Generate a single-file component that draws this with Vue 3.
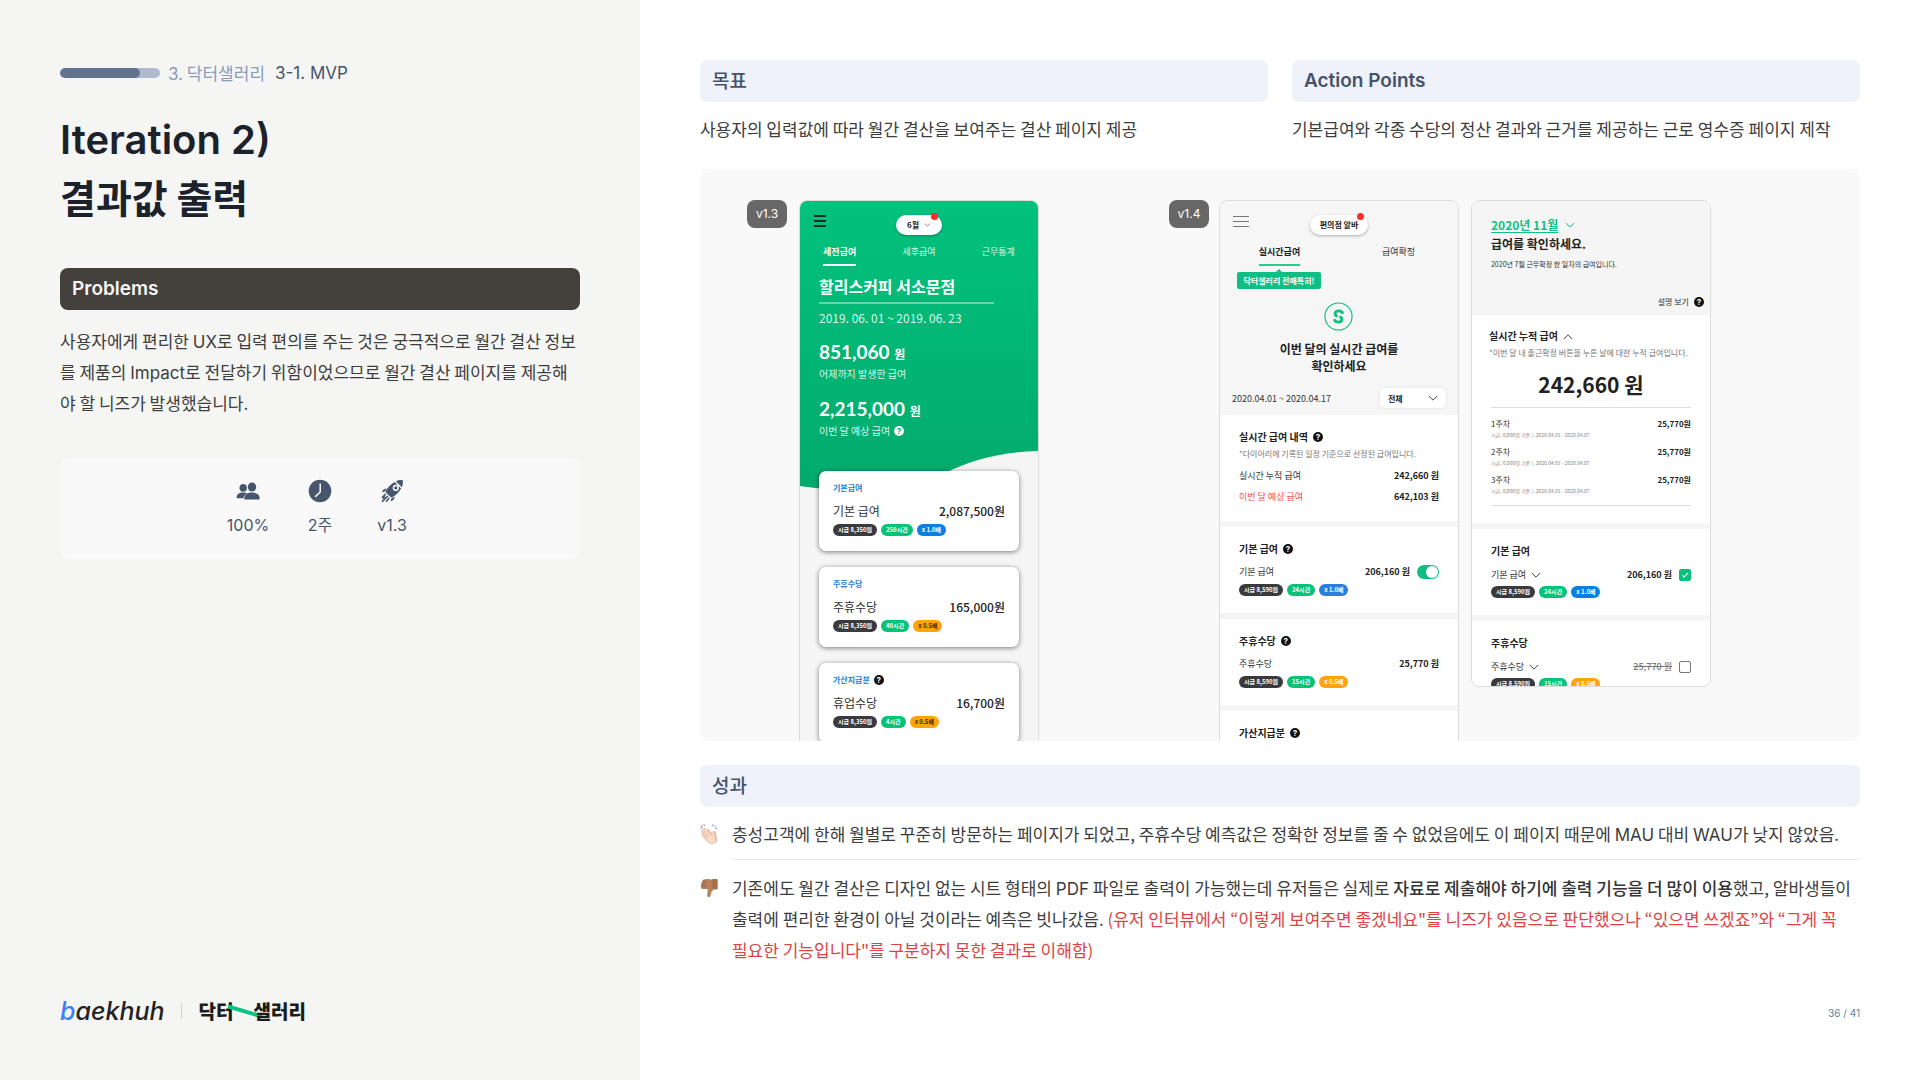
<script setup>
const stats = [
  { icon: 'people', label: '100%' },
  { icon: 'clock', label: '2주' },
  { icon: 'rocket', label: 'v1.3' },
]

const payCards = [
  {
    group: '기본급여', name: '기본 급여', amount: '2,087,500원', help: false,
    tags: [['dark', '시급 8,350원'], ['green', '250시간'], ['blue', 'x 1.0배']],
  },
  {
    group: '주휴수당', name: '주휴수당', amount: '165,000원', help: false,
    tags: [['dark', '시급 8,350원'], ['green', '40시간'], ['amber ink', 'x 0.5배']],
  },
  {
    group: '가산지급분', name: '휴업수당', amount: '16,700원', help: true,
    tags: [['dark', '시급 8,350원'], ['green', '4시간'], ['amber ink', 'x 0.5배']],
  },
]

const liveSections = [
  {
    title: '기본 급여', name: '기본 급여', amount: '206,160 원', toggle: true,
    tags: [['dark', '시급 8,590원'], ['green', '24시간'], ['royal', 'x 1.0배']],
  },
  {
    title: '주휴수당', name: '주휴수당', amount: '25,770 원', toggle: false,
    tags: [['dark', '시급 8,590원'], ['green', '15시간'], ['amber', 'x 0.5배']],
  },
]

const fixedSections = [
  {
    title: '기본 급여', name: '기본 급여', amount: '206,160 원', on: true,
    tags: [['dark', '시급 8,590원'], ['green', '24시간'], ['blue', 'x 1.0배']],
  },
  {
    title: '주휴수당', name: '주휴수당', amount: '25,770 원', on: false,
    tags: [['dark', '시급 8,590원'], ['green', '15시간'], ['amber', 'x 0.5배']],
  },
]

const weeks = ['1주차', '2주차', '3주차']
</script>

<template>
  <div class="slide">
    <aside class="side">
      <div class="crumb">
        <div class="progress"><div class="progress-fill"></div></div>
        <span class="crumb-parent"><span class="latin">3.</span> 닥터샐러리</span>
        <span class="crumb-current">3-1. MVP</span>
      </div>

      <h1 class="title">
        <span class="title-en">Iteration 2)</span>
        <span class="title-ko">결과값 출력</span>
      </h1>

      <h2 class="bar bar-dark">Problems</h2>
      <p class="copy problem">
        사용자에게 편리한 <span class="latin">UX</span>로 입력 편의를 주는 것은 궁극적으로 월간 결산 정보를 제품의
        <span class="latin">Impact</span>로 전달하기 위함이었으므로 월간 결산 페이지를 제공해야 할 니즈가 발생했습니다.
      </p>

      <ul class="stats">
        <li v-for="s in stats" :key="s.icon" class="stat">
          <svg v-if="s.icon === 'people'" viewBox="0 0 24 24" class="stat-icon">
            <ellipse cx="7.2" cy="8.8" rx="3.7" ry="3.9" />
            <path d="M.6 18.800c0-3.600 2.600-5.400 6.600-5.400 1.700 0 3 .4 4 1-2.200 1-3.600 2.600-3.700 4.900H1.200c-.4 0-.6-.1-.6-.5z" />
            <ellipse cx="16" cy="8" rx="4.200" ry="4.600" />
            <path d="M8.300 19.400c0-3.800 3.400-5.800 7.700-5.800s7.700 2 7.700 5.800c0 .8-.4 1.200-1.200 1.200h-13c-.8 0-1.200-.4-1.200-1.200z" />
          </svg>
          <svg v-else-if="s.icon === 'clock'" viewBox="0 0 24 24" class="stat-icon">
            <circle cx="12" cy="12" r="11.300" />
            <path d="M12.200 5v8l-4.600 4.400" fill="none" stroke="#f9f9f9" stroke-width="1.500" stroke-linecap="round" stroke-linejoin="round" />
          </svg>
          <svg v-else viewBox="0 0 24 24" class="stat-icon">
            <path d="M22.800 1.200c.4 3-.1 5-1 7L15.900 2.300c2-1 4.200-1.400 6.900-1.100z" />
            <path fill-rule="evenodd" d="M14.700 3l6.400 6.400c-1.400 2.800-5 6.600-9.200 9.200l-1.700-.8-4-4-.8-1.700C8 8.200 11.700 4.400 14.700 3zM15.800 5.800a3.100 3.100 0 1 0 0 6.200 3.100 3.100 0 0 0 0-6.200z" />
            <circle cx="15.800" cy="8.900" r="1.600" />
            <path d="M6.600 9.400L4.200 13.200 2 12.800c.6-2 2.400-3.400 4.600-3.400zM14.600 17.600l-3.800 2.400.3 2.300c2.300-.6 3.600-2.400 3.500-4.700z" />
            <path d="M5.300 15.400L2.400 18.300M7.400 17.400l-5 5M8.900 19.200L6.400 22.300M4.500 17.800l-1.400 1.500" fill="none" stroke="currentColor" stroke-width="1.500" stroke-linecap="round" />
          </svg>
          <span class="stat-label">{{ s.label }}</span>
        </li>
      </ul>

      <footer class="brands">
        <span class="baekhuh"><span class="baekhuh-b">b</span>aekhuh</span>
        <span class="brand-rule"></span>
        <span class="salary">
          닥터
          <svg class="slash" viewBox="0 0 34 14"><path d="M0 2.500L34 12.500" stroke="#06c584" stroke-width="4" /></svg>
          샐러리
        </span>
      </footer>
    </aside>

    <main class="content">
      <div class="goals">
        <section>
          <h2 class="bar bar-ko">목표</h2>
          <p class="copy">사용자의 입력값에 따라 월간 결산을 보여주는 결산 페이지 제공</p>
        </section>
        <section>
          <h2 class="bar">Action Points</h2>
          <p class="copy">기본급여와 각종 수당의 정산 결과와 근거를 제공하는 근로 영수증 페이지 제작</p>
        </section>
      </div>

      <div class="gallery">
        <div class="shot">
          <span class="version">v1.3</span>
          <div class="phone phone-green">
            <svg class="wave" viewBox="0 0 238 294" preserveAspectRatio="none">
              <defs>
                <linearGradient id="g" x1="0" y1="0" x2="0" y2="1">
                  <stop offset="0" stop-color="#02c27d" />
                  <stop offset="1" stop-color="#02aa6c" />
                </linearGradient>
              </defs>
              <path d="M0 0H238V250C200 251 172 259 147 271C110 291 60 294 0 285Z" fill="url(#g)" />
            </svg>
            <div class="topbar">
              <button class="menu menu-bold" aria-label="메뉴"><i></i><i></i><i></i></button>
              <button class="pill pill-month">6월
                <svg class="chev-xs" viewBox="0 0 10 6"><path d="M1 1l4 3.500L9 1" /></svg>
                <b class="dot"></b>
              </button>
            </div>
            <nav class="tabs tabs-white">
              <button class="tab"><span class="tab-text active">세전급여</span></button>
              <button class="tab"><span class="tab-text">세후급여</span></button>
              <button class="tab"><span class="tab-text">근무통계</span></button>
            </nav>
            <div class="summary">
              <h3 class="shop">할리스커피 서소문점</h3>
              <div class="period">2019. 06. 01 ~ 2019. 06. 23</div>
              <div class="sum">851,060 <small>원</small></div>
              <div class="sum-note">어제까지 발생한 급여</div>
              <div class="sum sum-next">2,215,000 <small>원</small></div>
              <div class="sum-note">이번 달 예상 급여 <span class="help help-white">?</span></div>
            </div>
            <div class="cards">
              <article v-for="c in payCards" :key="c.name" class="card">
                <div class="card-group">{{ c.group }}<span v-if="c.help" class="help">?</span></div>
                <div class="card-row"><span>{{ c.name }}</span><b>{{ c.amount }}</b></div>
                <div class="tags"><span v-for="t in c.tags" :key="t[1]" class="tag" :class="t[0]">{{ t[1] }}</span></div>
              </article>
            </div>
          </div>
        </div>

        <div class="shot shot-new">
          <span class="version">v1.4</span>
          <div class="pair">
            <div class="phone">
              <header class="live-head">
                <div class="topbar">
                  <button class="menu" aria-label="메뉴"><i></i><i></i><i></i></button>
                  <button class="pill pill-shop">편의점 알바<b class="dot"></b></button>
                </div>
                <nav class="tabs">
                  <button class="tab"><span class="tab-text active">실시간급여</span></button>
                  <button class="tab"><span class="tab-text">급여확정</span></button>
                </nav>
                <div class="tip">닥터샐러리 전매특허!</div>
                <svg class="emblem" viewBox="0 0 30 30">
                  <circle cx="15" cy="15" r="14" fill="none" stroke="#12c083" stroke-width="1.200" />
                  <path d="M19.200 12.200C19 10.300 17.400 9.200 15.300 9.200c-2.300 0-3.800 1-3.800 2.900 0 1.500.9 2.300 2.600 2.800" fill="none" stroke="#12c083" stroke-width="3" />
                  <path d="M10.800 17.800C11 19.700 12.600 20.800 14.700 20.800c2.300 0 3.800-1 3.800-2.900 0-1.500-.9-2.300-2.600-2.800" fill="none" stroke="#12c083" stroke-width="3" />
                </svg>
                <h3 class="live-title">이번 달의 실시간 급여를<br>확인하세요</h3>
                <div class="filter">
                  <label for="scope">2020.04.01 ~ 2020.04.17</label>
                  <div class="select">
                    <select id="scope"><option>전체</option></select>
                    <svg class="chev" viewBox="0 0 12 8"><path d="M1 1l5 5 5-5" /></svg>
                  </div>
                </div>
              </header>
              <section class="sec">
                <h4 class="sec-title">실시간 급여 내역 <span class="help">?</span></h4>
                <p class="sec-note">*다이어리에 기록된 일정 기준으로 산정된 급여입니다.</p>
                <div class="row row-first"><span>실시간 누적 급여</span><b>242,660 원</b></div>
                <div class="row row-next"><span class="red">이번 달 예상 급여</span><b>642,103 원</b></div>
              </section>
              <section v-for="s in liveSections" :key="s.title" class="sec">
                <h4 class="sec-title">{{ s.title }} <span class="help">?</span></h4>
                <label class="row">
                  <span>{{ s.name }}</span><b>{{ s.amount }}</b>
                  <input v-if="s.toggle" type="checkbox" class="toggle" checked>
                </label>
                <div class="tags"><span v-for="t in s.tags" :key="t[1]" class="tag" :class="t[0]">{{ t[1] }}</span></div>
              </section>
              <section class="sec">
                <h4 class="sec-title">가산지급분 <span class="help">?</span></h4>
              </section>
            </div>

            <div class="phone phone-short">
              <header class="fixed-head">
                <div class="month"><a href="#">2020년 11월</a>
                  <svg class="chev chev-green" viewBox="0 0 12 8"><path d="M1 1l5 5 5-5" /></svg>
                </div>
                <h3 class="fixed-title">급여를 확인하세요.</h3>
                <p class="fixed-note">2020년 7월 근무확정 한 일자의 급여입니다.</p>
                <div class="explain">설명 보기 <span class="help">?</span></div>
              </header>
              <section class="sec sec-total">
                <h4 class="sec-title">실시간 누적 급여
                  <svg class="chev chev-up" viewBox="0 0 12 8"><path d="M1 7l5-5 5 5" /></svg>
                </h4>
                <p class="sec-note">*이번 달 내 출근확정 버튼을 누른 날에 대한 누적 급여입니다.</p>
                <div class="total">242,660 원</div>
                <ul class="weeks">
                  <li v-for="w in weeks" :key="w">
                    <div class="week"><span>{{ w }}</span><b>25,770원</b></div>
                    <div class="week-note">시급. 0,000원 기준 /. 2020.04.01 - 2020.04.07</div>
                  </li>
                </ul>
              </section>
              <section v-for="s in fixedSections" :key="s.title" class="sec">
                <h4 class="sec-title">{{ s.title }}</h4>
                <label class="row">
                  <span class="row-name">{{ s.name }} <svg class="chev" viewBox="0 0 12 8"><path d="M1 1l5 5 5-5" /></svg></span>
                  <b :class="{ off: !s.on }">{{ s.amount }}</b>
                  <input type="checkbox" class="check" :checked="s.on">
                </label>
                <div class="tags"><span v-for="t in s.tags" :key="t[1]" class="tag" :class="t[0]">{{ t[1] }}</span></div>
              </section>
            </div>
          </div>
        </div>
      </div>

      <section>
        <h2 class="bar bar-ko">성과</h2>
        <ul class="results">
          <li class="result">
            <svg class="emoji" viewBox="0 0 18 20">
              <path d="M1 1.500l1.500 1M.8 4h1.400M4 .5l.5 1.300M13 .6l-.6 1.400M15.500 1.800l-1 1.200M17 4.200l-1.300.4" stroke="#8a9299" stroke-width="1" stroke-linecap="round" />
              <path d="M7 5.500c.4-1 1.600-1 2.200-.1l4 5 .3-2.400c.2-1.300 2-1.300 2.300 0l1.600 7.500c.4 2-2.400 4.400-5.400 4.300z" fill="#eccab4" />
              <path d="M2 6.400c.7-.7 1.400-.5 2 .1L3.600 5c.6-.9 1.500-.8 2.200 0l6 6.600.4-3c.2-1.300 1.700-1.300 2 0l1.400 6c.7 3-1.600 5-4 5-2 0-3-.8-4-1.900L2.200 12c-.7-.9-.2-1.800.7-1.900L1.600 8.200c-.4-.7-.2-1.400.4-1.800z" fill="#fadcc8" stroke="#d9a88c" stroke-width=".6" />
              <path d="M4 6.500l4.800 5.400M3 10.100l4.400 4.500M2.500 7.600l5.400 5.800" stroke="#d9a88c" stroke-width=".6" fill="none" />
            </svg>
            <p class="copy result-text line">
              충성고객에 한해 월별로 꾸준히 방문하는 페이지가 되었고, 주휴수당 예측값은 정확한 정보를 줄 수 없었음에도 이 페이지 때문에
              <span class="latin">MAU</span> 대비 <span class="latin">WAU</span>가 낮지 않았음.
            </p>
          </li>
          <li class="result">
            <svg class="emoji" viewBox="0 0 18 20">
              <path d="M12 1h4.500c.8 0 1.200.5 1.200 1.200v8c0 .8-.4 1.300-1.200 1.300H13z" fill="#a8714e" />
              <path d="M12.500 2C10 .6 6.500.6 3.600 1.600 2.500 2 2.300 3 2.700 3.600 1.400 4 1 5.200 1.600 6c-1 .6-1 2-.2 2.500-.8 1-.2 2.400 1 2.500H7.600c.3 2-.2 3.700-.4 5.800-.2 1.800 1 2.700 2.300 2.300 1-.3 1.100-1.600 1.400-3 .4-2 1.200-3.500 3.300-5z" fill="#b5805c" />
              <path d="M2.700 3.600h3.700M1.600 6h4.600M1.500 8.500h4.300M12.800 2.200c.8 2.500.8 5.800.2 8" fill="none" stroke="#85563a" stroke-width=".7" />
            </svg>
            <p class="copy result-text">
              기존에도 월간 결산은 디자인 없는 시트 형태의 <span class="latin">PDF</span> 파일로 출력이 가능했는데 유저들은 실제로
              <strong>자료로 제출해야 하기에 출력 기능을 더 많이 이용</strong>했고, 알바생들이 출력에 편리한 환경이 아닐 것이라는 예측은 빗나갔음.
              <em>(유저 인터뷰에서 “이렇게 보여주면 좋겠네요"를 니즈가 있음으로 판단했으나 “있으면 쓰겠죠”와 “그게 꼭<br>필요한 기능입니다"를 구분하지 못한 결과로 이해함)</em>
            </p>
          </li>
        </ul>
      </section>

      <div class="page-no">36 / 41</div>
    </main>
  </div>
</template>

<style>
body { margin: 0; background: #fff; }
</style>

<style scoped>
.slide {
  display: flex;
  min-height: 100vh;
  font-family: "Noto Sans CJK KR", "Noto Sans", sans-serif;
  color: #3d3d3d;
}
h1, h2, h3, h4, p, ul { margin: 0; padding: 0; }
ul { list-style: none; }
button, select { border: 0; padding: 0; background: none; font: inherit; color: inherit; }
i, em { font-style: normal; }
.latin { font-family: Inter, sans-serif; line-height: 1; }

/* left column */
.side {
  box-sizing: border-box;
  flex: 0 0 calc(100% / 3);
  display: flex;
  flex-direction: column;
  padding: 60px;
  background: #f5f5f3;
}
.crumb { display: flex; align-items: center; height: 26px; font-size: 17px; line-height: 26px; white-space: nowrap; }
.progress { width: 100px; height: 10px; margin-right: 8px; border-radius: 5px; background: #afbacc; overflow: hidden; }
.progress-fill { width: 80%; height: 100%; border-radius: 5px; background: #62738f; }
.crumb-parent { margin-right: 10px; color: #8c9bb8; }
.crumb-current { font-family: Inter, sans-serif; color: #47556b; }
.title { display: flex; flex-direction: column; margin-top: 24px; color: #1c222c; }
.title-en { font: 600 40px/59px Inter, sans-serif; }
.title-ko { font-size: 39px; line-height: 55px; font-weight: 700; }
.bar {
  height: 42px;
  box-sizing: border-box;
  padding: 0 12px;
  border-radius: 8px;
  background: #eff2fa;
  color: #45536a;
  font: 600 19px/42px Inter, "Noto Sans CJK KR", sans-serif;
}
.bar-ko { font-family: "Noto Sans CJK KR", sans-serif; line-height: 40px; font-weight: 500; }
.bar-dark { margin-top: 44px; background: #44403b; color: #f5f5f8; }
.copy { margin: 11px 0 1px; font-size: 17px; line-height: 31px; }
.problem { margin-top: 15px; }
.stats {
  display: flex;
  justify-content: center;
  gap: 32px;
  box-sizing: border-box;
  height: 100px;
  margin-top: 40px;
  padding-top: 20px;
  border-radius: 8px;
  background: #f9f9f9;
  color: #47566d;
}
.stat { display: flex; flex-direction: column; align-items: center; gap: 11px; width: 40px; }
.stat-icon { width: 24px; height: 24px; fill: currentColor; }
.stat-label { font: 16px/22px Inter, "Noto Sans CJK KR", sans-serif; }
.brands { display: flex; align-items: center; height: 24px; margin: auto 0 -3px; }
.baekhuh { font: italic 500 25px/24px Inter, sans-serif; font-feature-settings: "cv11"; color: #222; }
.baekhuh-b { color: #3b7fff; }
.brand-rule { width: 1px; height: 16px; margin: 0 17px 0 16px; background: #ccc; }
.salary { display: flex; align-items: center; font-size: 19px; line-height: 24px; font-weight: 900; color: #1c1c1c; }
.slash { width: 34px; height: 14px; margin: 0 -8px 0 -6px; fill: none; }

/* right column */
.content { box-sizing: border-box; flex: 1; min-width: 0; display: flex; flex-direction: column; padding: 60px; }
.goals { display: grid; grid-template-columns: 1fr 1fr; gap: 24px; }
.gallery {
  display: flex;
  gap: 130px;
  box-sizing: border-box;
  height: 572px;
  margin: 24px 0;
  padding: 31px 47px 0;
  border-radius: 8px;
  background: #f9f9f9;
  overflow: hidden;
}
.shot { display: flex; align-items: flex-start; gap: 12px; }
.shot-new { gap: 10px; }
.pair { display: flex; align-items: flex-start; gap: 12px; }
.version { width: 40px; border-radius: 8px; background: #676767; color: #fff; font: 12px/28px Inter, sans-serif; text-align: center; }

/* phone screens */
.phone {
  position: relative;
  box-sizing: border-box;
  width: 240px;
  height: 640px;
  border: 1px solid #dcdcdc;
  border-radius: 8px;
  background: #fff;
  overflow: hidden;
  color: #333;
  font-size: 9px;
}
.phone-green { background: #f5f5f5; }
.phone-short { height: 487px; }
.wave { position: absolute; inset: 0 0 auto; width: 100%; height: 294px; }
.topbar { position: relative; display: grid; grid-template-columns: 1fr auto 1fr; align-items: start; padding: 14px 13px 0; }
.menu { display: flex; flex-direction: column; gap: 4px; width: 16px; padding-top: 1px; }
.menu i { height: 1px; background: #777; }
.menu-bold { gap: 3px; width: 12px; padding-top: 0; margin-left: 1px; }
.menu-bold i { height: 2px; background: #1b2b25; }
.pill { position: relative; height: 20px; border-radius: 10px; background: #fff; color: #222; font-size: 8px; font-weight: 700; line-height: 20px; box-shadow: 0 1px 3px rgba(0, 0, 0, .3); }
.pill-month { width: 46px; }
.pill-shop { width: 58px; }
.dot { position: absolute; top: -2px; right: 4px; width: 7px; height: 7px; border-radius: 50%; background: #fb2c2c; }
.chev-xs { width: 7px; height: 4px; margin-left: 3px; fill: none; stroke: #555; vertical-align: 1px; }
.tabs { position: relative; display: flex; margin-top: 9px; }
.tab { flex: 1; display: flex; justify-content: center; }
.tab-text { height: 20px; border-bottom: 2px solid transparent; font-size: 9px; line-height: 15px; }
.active { border-color: #2cc98c; font-weight: 700; color: #222; }
.tabs-white { color: #d8f5e9; }
.tabs-white .active { border-color: #fff; color: #fff; }

.summary { position: relative; padding: 10px 19px 0; color: #fff; }
.shop { width: 175px; padding-bottom: 5px; border-bottom: 2px solid rgba(255, 255, 255, .4); font-size: 16px; line-height: 21px; font-weight: 700; white-space: nowrap; }
.period { margin-top: 4px; font-size: 12px; line-height: 20px; color: #dcf6eb; }
.sum { margin-top: 12px; font: 700 19px/24px Lato, sans-serif; }
.sum small { font: 700 12px/20px "Noto Sans CJK KR", sans-serif; }
.sum-next { margin-top: 15px; }
.sum-note { display: flex; align-items: center; gap: 4px; margin-top: 2px; font-size: 10px; line-height: 16px; color: #d8f5e9; }
.help { flex: none; width: 10px; height: 10px; border-radius: 50%; background: #111; color: #fff; font: 700 8px/10px Inter, sans-serif; text-align: center; }
.help-white { background: #fff; color: #02ae6f; }

.cards { position: relative; display: flex; flex-direction: column; gap: 16px; padding: 32px 19px 0; }
.card { box-sizing: border-box; height: 80px; flex: none; padding: 11px 14px 0; border-radius: 7px; background: #fff; box-shadow: 0 1px 5px rgba(0, 0, 0, .5); }
.card-group { display: flex; align-items: center; gap: 4px; color: #1a80d2; font-size: 8px; line-height: 12px; font-weight: 700; }
.card-row { display: flex; justify-content: space-between; margin-top: 8px; font-size: 12px; line-height: 18px; }
.card-row b { font-weight: 500; color: #222; }
.tags { display: flex; gap: 4px; margin-top: 5px; }
.card .tags { margin-top: 4px; }
.tag { height: 12px; padding: 0 5px; border-radius: 6px; color: #fff; font-size: 6px; line-height: 12px; font-weight: 700; white-space: nowrap; }
.dark { background: #3a3a3c; }
.green { background: #08c277; }
.blue { background: #087fe6; }
.royal { background: #2b7de0; }
.amber { background: #ffa408; }
.ink { color: #3a2a00; }

.live-head { display: flex; flex-direction: column; height: 214px; background: #f6f6f6; }
.tip { position: relative; align-self: flex-start; margin: 6px 0 0 17px; width: 84px; border-radius: 2px; background: #10be83; color: #fff; font-size: 8px; line-height: 17px; font-weight: 700; text-align: center; }
.tip::before { content: ""; position: absolute; left: 39px; top: -3px; border: 3px solid transparent; border-top: 0; border-bottom-color: #10be83; }
.emblem { align-self: center; width: 29px; height: 29px; margin-top: 13px; }
.live-title { margin-top: 9px; text-align: center; font-size: 12px; line-height: 17px; font-weight: 700; color: #222; }
.filter { display: flex; justify-content: space-between; align-items: center; margin-top: 14px; padding: 0 12px; }
.select { display: grid; width: 66px; height: 20px; border-radius: 5px; background: #fff; box-shadow: 0 0 3px rgba(0, 0, 0, .1); }
.select > * { grid-area: 1 / 1; }
.select select { appearance: none; padding-left: 8px; font-size: 8px; font-weight: 700; color: #222; }
.select .chev { align-self: center; justify-self: end; margin-right: 8px; pointer-events: none; }
.chev { flex: none; width: 10px; height: 7px; fill: none; stroke: #444; stroke-width: 1.2; }
.chev-green { stroke: #12c083; }

.sec { padding: 14px 19px 17px; border-bottom: 6px solid #f5f5f5; }
.sec-title { display: flex; align-items: center; gap: 5px; font-size: 10px; line-height: 16px; font-weight: 700; color: #222; }
.sec-note { margin-top: 3px; font-size: 8px; line-height: 12px; color: #777; white-space: nowrap; }
.row { display: flex; align-items: center; gap: 7px; margin-top: 8px; font-size: 9px; line-height: 14px; }
.row-name { display: flex; align-items: center; gap: 5px; }
.row b, .week b { margin-left: auto; color: #222; }
.row-first { margin-top: 9px; }
.row-next { margin-top: 7px; }
.red { color: #fb4d4d; }
.toggle { appearance: none; box-sizing: border-box; display: flex; justify-content: flex-end; width: 22px; height: 14px; margin: 0; padding: 1px; border-radius: 7px; background: #10be83; }
.toggle::before { content: ""; width: 12px; height: 12px; border-radius: 50%; background: #fff; }

.fixed-head { box-sizing: border-box; height: 114px; padding: 15px 6px 0 19px; background: #f5f5f5; }
.month { display: flex; align-items: center; gap: 7px; font-size: 12px; line-height: 18px; font-weight: 700; }
.month a { color: #12c083; text-underline-offset: 2px; }
.fixed-title { margin-top: 1px; font-size: 12px; line-height: 18px; font-weight: 700; color: #222; }
.fixed-note { margin-top: 5px; font-size: 7px; line-height: 12px; }
.explain { display: flex; justify-content: flex-end; align-items: center; gap: 5px; margin-top: 26px; font-size: 8px; line-height: 12px; }
.sec-total { padding: 13px 19px 17px; }
.sec-total .sec-title, .sec-total .sec-note { margin-left: -2px; }
.total { margin-top: 10px; font-size: 21px; line-height: 30px; font-weight: 700; color: #222; text-align: center; }
.weeks { display: flex; flex-direction: column; gap: 7px; margin-top: 8px; padding: 10px 0; border: solid #ddd; border-width: 1px 0; }
.week { display: flex; font-size: 8px; line-height: 12px; }
.week-note { font-size: 5px; line-height: 9px; color: #888; }
.phone-short .row { margin-top: 9px; }
.phone-short .tags { margin-top: 4px; }
.row .off { color: #777; text-decoration: line-through; font-weight: 500; }
.check { appearance: none; box-sizing: border-box; display: grid; place-items: center; width: 12px; height: 12px; margin: 0; border: 1px solid #777; border-radius: 2px; background: #fff; }
.check:checked { border-color: #06c07c; background: #06c07c; }
.check:checked::before { content: ""; width: 5px; height: 2px; margin-bottom: 2px; border: solid #fff; border-width: 0 0 1px 1px; transform: rotate(-45deg); }

/* results */
.result { display: flex; }
.emoji { flex: none; width: 18px; height: 20px; margin: 17px 14px 0 0; fill: none; }
.result-text { flex: 1; }
.line { padding-bottom: 10px; border-bottom: 1px solid #e8e8e8; }
.result strong { font-weight: 500; color: #333; }
.result em { color: #dc4343; }
.page-no { margin-top: auto; text-align: right; color: #6b7c99; font: 10px/13px Inter, sans-serif; }
</style>
